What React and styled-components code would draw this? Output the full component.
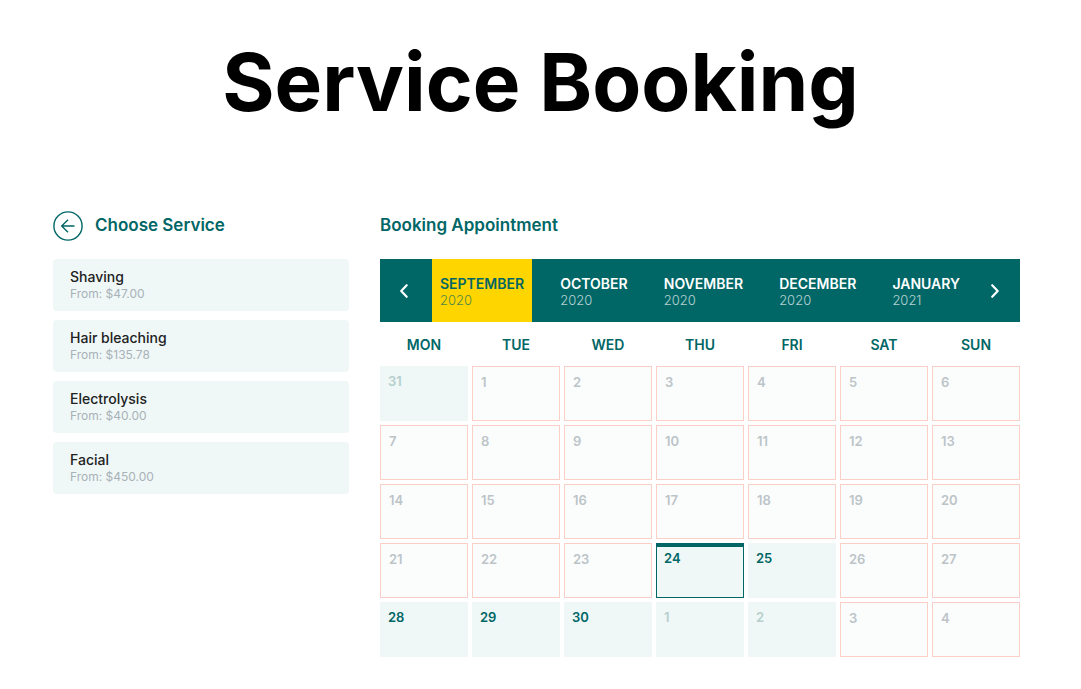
import React, { useState } from "react";
import styled, { createGlobalStyle, css } from "styled-components";

const TEAL = "#006666";
const MINT = "#eff8f7";

const GlobalStyle = createGlobalStyle`
  *, *::before, *::after { box-sizing: border-box; }
  body { margin: 0; background: #fff; font-family: Inter, "Liberation Sans", sans-serif; }
  button { font: inherit; border: 0; margin: 0; padding: 0; cursor: pointer; }
`;

const Page = styled.main`
  padding: 32px 0;
`;

const Title = styled.h1`
  margin: 0 0 73px;
  font-size: 80px;
  line-height: 100px;
  font-weight: 700;
  text-align: center;
  color: #000;
  white-space: nowrap;
`;

const Columns = styled.div`
  display: grid;
  grid-template-columns: 296px minmax(0, 1fr);
  gap: 31px;
  align-items: start;
  padding: 0 61px 0 53px;
`;

const PanelHeader = styled.header`
  display: flex;
  align-items: center;
  gap: 12px;
  height: 42px;
  margin-bottom: 12px;
`;

const PanelTitle = styled.h2`
  margin: 0;
  padding-bottom: 2px;
  font-size: 17px;
  line-height: 24px;
  font-weight: 600;
  color: ${TEAL};
`;

const BackButton = styled.button`
  display: flex;
  width: 30px;
  height: 30px;
  background: none;
  color: ${TEAL};
`;

const ServiceList = styled.ul`
  display: grid;
  gap: 9px;
  margin: 0;
  padding: 0;
  list-style: none;
`;

const ServiceCard = styled.button`
  display: block;
  width: 100%;
  height: 52px;
  padding: 0 17px;
  border-radius: 4px;
  background: ${MINT};
  text-align: left;
`;

const ServiceName = styled.span`
  display: block;
  font-size: 14px;
  line-height: 18px;
  font-weight: 500;
  color: #222;
`;

const ServicePrice = styled.span`
  display: block;
  font-size: 12px;
  line-height: 16px;
  color: #a9b1b8;
`;

const MonthBar = styled.nav`
  display: flex;
  height: 63px;
  background: ${TEAL};
`;

const MonthArrow = styled.button`
  display: flex;
  flex: 0 0 52px;
  align-items: center;
  justify-content: center;
  background: none;
  color: #fff;
`;

const Months = styled.div`
  display: flex;
  flex: 1;
  justify-content: space-between;
`;

const MonthTab = styled.button`
  padding: 2px 8px 0;
  text-align: left;
  background: ${(p) => (p.$active ? "#ffd500" : "transparent")};
  color: ${(p) => (p.$active ? TEAL : "#fff")};
`;

const MonthName = styled.span`
  display: block;
  font-size: 14px;
  line-height: 16px;
  font-weight: 600;
`;

const MonthYear = styled.span`
  display: block;
  font-size: 13px;
  line-height: 16px;
  font-weight: 300;
  opacity: 0.7;
`;

const Calendar = styled.table`
  display: block;
`;

const CalendarHead = styled.thead`
  display: block;
`;

const CalendarBody = styled.tbody`
  display: grid;
  gap: 4px;
`;

const Week = styled.tr`
  display: grid;
  grid-template-columns: repeat(7, minmax(0, 1fr));
  gap: 4px;
`;

const WeekDay = styled.th`
  padding: 2px 0 0;
  font-size: 14px;
  line-height: 42px;
  font-weight: 600;
  color: ${TEAL};
`;

const DayCell = styled.td`
  padding: 0;
`;

const dayStyles = {
  closed: css`
    border: 1px solid #f9cfc8;
    background: #fbfdfd;
    color: #bcc4c8;
  `,
  open: css`
    background: ${MINT};
    color: ${TEAL};
  `,
  outside: css`
    background: ${MINT};
    color: #b5cfcd;
  `,
  today: css`
    border: 1px solid ${TEAL};
    border-top-width: 4px;
    background: ${MINT};
    color: ${TEAL};
  `,
};

const Day = styled.button`
  display: flex;
  width: 100%;
  height: 55px;
  padding: ${(p) => (p.$kind === "today" ? "3px 7px" : "7px 8px")};
  font-size: 13px;
  line-height: 16px;
  font-weight: 600;
  ${(p) => dayStyles[p.$kind]}
`;

const services = [
  ["Shaving", "$47.00"],
  ["Hair bleaching", "$135.78"],
  ["Electrolysis", "$40.00"],
  ["Facial", "$450.00"],
];

const months = [
  ["SEPTEMBER", 2020],
  ["OCTOBER", 2020],
  ["NOVEMBER", 2020],
  ["DECEMBER", 2020],
  ["JANUARY", 2021],
];

const weekDays = ["MON", "TUE", "WED", "THU", "FRI", "SAT", "SUN"];

const kindOf = (index) => {
  if (index === 0 || index === 31 || index === 32) return "outside";
  if (index === 24) return "today";
  if (index === 25 || (index >= 28 && index <= 30)) return "open";
  return "closed";
};

const days = Array.from({ length: 35 }, (_, i) => ({
  label: i === 0 ? 31 : i > 30 ? i - 30 : i,
  kind: kindOf(i),
}));

const weeks = [0, 1, 2, 3, 4].map((w) => days.slice(w * 7, w * 7 + 7));

function Chevron({ d }) {
  return (
    <svg width="16" height="16" viewBox="0 0 16 16" fill="none" stroke="currentColor" strokeWidth="2.2" strokeLinecap="round" strokeLinejoin="round" aria-hidden="true">
      <path d={d} />
    </svg>
  );
}

export default function App() {
  const [month, setMonth] = useState(0);
  const step = (by) => setMonth((m) => Math.min(months.length - 1, Math.max(0, m + by)));

  return (
    <>
      <GlobalStyle />
      <Page>
        <Title>Service Booking</Title>
        <Columns>
          <section>
            <PanelHeader>
              <BackButton aria-label="Back">
                <svg width="30" height="30" viewBox="0 0 30 30" fill="none" stroke="currentColor" strokeWidth="1.4" aria-hidden="true">
                  <circle cx="15" cy="15" r="14.1" />
                  <path d="M21.5 15H9M15 8.7L8.7 15l6.3 6.3" />
                </svg>
              </BackButton>
              <PanelTitle>Choose Service</PanelTitle>
            </PanelHeader>
            <ServiceList>
              {services.map(([name, price]) => (
                <li key={name}>
                  <ServiceCard>
                    <ServiceName>{name}</ServiceName>
                    <ServicePrice>From: {price}</ServicePrice>
                  </ServiceCard>
                </li>
              ))}
            </ServiceList>
          </section>
          <section>
            <PanelHeader>
              <PanelTitle>Booking Appointment</PanelTitle>
            </PanelHeader>
            <MonthBar aria-label="Months">
              <MonthArrow aria-label="Previous month" onClick={() => step(-1)}>
                <Chevron d="M8.7 2.2L3.2 8l5.5 5.8" />
              </MonthArrow>
              <Months>
                {months.map(([name, year], i) => (
                  <MonthTab key={name} $active={i === month} aria-pressed={i === month} onClick={() => setMonth(i)}>
                    <MonthName>{name}</MonthName>
                    <MonthYear>{year}</MonthYear>
                  </MonthTab>
                ))}
              </Months>
              <MonthArrow aria-label="Next month" onClick={() => step(1)}>
                <Chevron d="M6.2 2.2L11.7 8L6.2 13.8" />
              </MonthArrow>
            </MonthBar>
            <Calendar>
              <CalendarHead>
                <Week>
                  {weekDays.map((d) => (
                    <WeekDay key={d} scope="col">{d}</WeekDay>
                  ))}
                </Week>
              </CalendarHead>
              <CalendarBody>
                {weeks.map((week, w) => (
                  <Week key={w}>
                    {week.map((day, i) => (
                      <DayCell key={i}>
                        <Day $kind={day.kind}>{day.label}</Day>
                      </DayCell>
                    ))}
                  </Week>
                ))}
              </CalendarBody>
            </Calendar>
          </section>
        </Columns>
      </Page>
    </>
  );
}
